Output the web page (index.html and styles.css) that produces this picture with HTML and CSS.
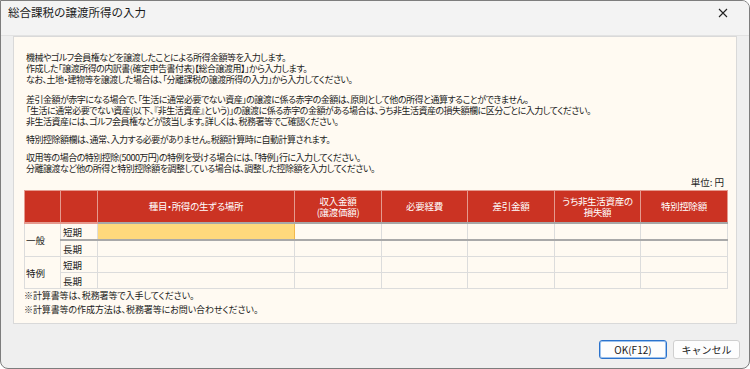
FILE: index.html
```html
<!DOCTYPE html>
<html lang="ja">
<head>
    <meta charset="UTF-8">
    <title>総合課税の譲渡所得の入力</title>
    <link rel="stylesheet" href="styles.css">
</head>
<body>
    <div class="window">
        <div class="titlebar">
            <span class="title">総合課税の譲渡所得の入力</span>
            <svg class="close" width="10" height="10" viewBox="0 0 10 10">
                <path d="M1 1 L9 9 M9 1 L1 9" stroke="#222" stroke-width="1.1" fill="none"/>
            </svg>
        </div>
        <div class="content">
            <div class="panel">
                <!-- 説明文 -->
                <p class="note first">機械やゴルフ会員権などを譲渡したことによる所得金額等を入力します。<br>作成した「譲渡所得の内訳書(確定申告書付表)【総合譲渡用】」から入力します。<br>なお、土地・建物等を譲渡した場合は、「分離課税の譲渡所得の入力」から入力してください。</p>
                <p class="note second">差引金額が赤字になる場合で、「生活に通常必要でない資産」の譲渡に係る赤字の金額は、原則として他の所得と通算することができません。<br>「生活に通常必要でない資産(以下、『非生活資産』という)」の譲渡に係る赤字の金額がある場合は、うち非生活資産の損失額欄に区分ごとに入力してください。<br>非生活資産には、ゴルフ会員権などが該当します。詳しくは、税務署等でご確認ください。</p>
                <p class="note third">特別控除額欄は、通常、入力する必要がありません。税額計算時に自動計算されます。</p>
                <p class="note fourth">収用等の場合の特別控除(5000万円)の特例を受ける場合には、「特例」行に入力してください。<br>分離譲渡など他の所得と特別控除額を調整している場合は、調整した控除額を入力してください。</p>

                <div class="unit">単位: 円</div>
                <table class="income-table">
                    <colgroup>
                        <col style="width:36px"><col style="width:37px"><col style="width:197px">
                        <col style="width:87px"><col style="width:86px"><col style="width:87px">
                        <col style="width:86px"><col style="width:87px">
                    </colgroup>
                    <thead>
                        <tr>
                            <th></th>
                            <th></th>
                            <th>種目・所得の生ずる場所</th>
                            <th>収入金額<br>(譲渡価額)</th>
                            <th>必要経費</th>
                            <th>差引金額</th>
                            <th>うち非生活資産の<br>損失額</th>
                            <th>特別控除額</th>
                        </tr>
                    </thead>
                    <tbody>
                        <tr class="active-row">
                            <td class="group" rowspan="2">一般</td>
                            <td class="term">短期</td>
                            <td class="focused"></td><td></td><td></td><td></td><td></td><td></td>
                        </tr>
                        <tr>
                            <td class="term">長期</td>
                            <td></td><td></td><td></td><td></td><td></td><td></td>
                        </tr>
                        <tr>
                            <td class="group" rowspan="2">特例</td>
                            <td class="term">短期</td>
                            <td></td><td></td><td></td><td></td><td></td><td></td>
                        </tr>
                        <tr>
                            <td class="term">長期</td>
                            <td></td><td></td><td></td><td></td><td></td><td></td>
                        </tr>
                    </tbody>
                </table>
                <p class="remark">※計算書等は、税務署等で入手してください。</p>
                <p class="remark">※計算書等の作成方法は、税務署等にお問い合わせください。</p>
            </div>
        </div>
        <div class="footer">
            <button class="btn primary">OK(F12)</button>
            <button class="btn">キャンセル</button>
        </div>
    </div>
</body>
</html>
```

FILE: styles.css
```css
body {
    margin: 0;
    font-family: "Noto Sans CJK JP", sans-serif;
    background: #ffffff;
}
.window {
    width: 750px;
    height: 369px;
    box-sizing: border-box;
    border: 1px solid #7d7d7d;
    border-radius: 0 8px 8px 8px;
    background: #efefef;
    display: flex;
    flex-direction: column;
    overflow: hidden;
}
.titlebar {
    height: 35px;
    box-sizing: border-box;
    background: #f3f3f3;
    border-bottom: 1px solid #e2e2e2;
    display: flex;
    align-items: flex-start;
    justify-content: space-between;
    padding: 4px 21px 0 7px;
}
.title {
    font-size: 11.5px;
    line-height: 15px;
    color: #1a1a1a;
}
.close {
    margin-top: 3px;
}
.content {
    padding: 0 12px;
}
.panel {
    height: 288px;
    box-sizing: border-box;
    background: #fffaf2;
    border: 1px solid #d9d9d9;
    padding: 15px 9px 0 10px;
}
.note {
    margin: 0;
    padding-left: 2px;
    font-size: 9px;
    line-height: 11px;
    letter-spacing: -0.5px;
    color: #1a1a1a;
    font-feature-settings: "palt";
    white-space: nowrap;
}
.second {
    margin-top: 9px;
}
.third {
    margin-top: 7px;
}
.fourth {
    margin-top: 7px;
}
.unit {
    margin-top: 3px;
    text-align: right;
    padding-right: 3px;
    font-size: 9.5px;
    line-height: 11px;
    color: #1a1a1a;
}
.income-table {
    margin-top: 2px;
    width: 703px;
    border-collapse: collapse;
    table-layout: fixed;
    font-size: 9.5px;
    color: #1a1a1a;
}
.income-table th {
    height: 31px;
    padding: 0;
    background: #cb3323;
    color: #ffffff;
    font-weight: normal;
    line-height: 11px;
    letter-spacing: -0.3px;
    border: 1px solid #e59a8f;
    border-bottom: 2px solid #a7a7a7;
    font-feature-settings: "palt";
}
.income-table th:first-child,
.income-table th:nth-child(2) {
    border-bottom-color: #e59a8f;
}
.income-table td {
    height: 15px;
    padding: 0;
    border: 1px solid #dcdcdc;
}
.income-table .group {
    padding-left: 1px;
    vertical-align: middle;
}
.income-table .term {
    padding-left: 2px;
}
.active-row td:not(.group) {
    border-bottom: 2px solid #a9a9a9;
}
.income-table td.focused {
    background: #ffd97c;
    border: 1px solid #f2b84b;
    border-bottom: 2px solid #a9a9a9;
}
.remark {
    margin: 0;
    font-size: 9px;
    line-height: 14px;
    letter-spacing: -0.1px;
    color: #1a1a1a;
    font-feature-settings: "palt";
}
.footer {
    display: flex;
    justify-content: flex-end;
    gap: 6px;
    padding: 16px 9px 0 0;
}
.btn {
    height: 19px;
    padding: 0;
    font-family: "Noto Sans CJK JP", sans-serif;
    font-size: 10px;
    color: #1a1a1a;
    background: #fdfdfd;
    border: 1px solid #cfcfcf;
    border-radius: 3px;
}
.btn.primary {
    width: 68px;
    border: 1px solid #2a72cc;
    box-shadow: inset 0 0 0 1px #9cc2ee;
}
.btn:not(.primary) {
    width: 67px;
}
```
